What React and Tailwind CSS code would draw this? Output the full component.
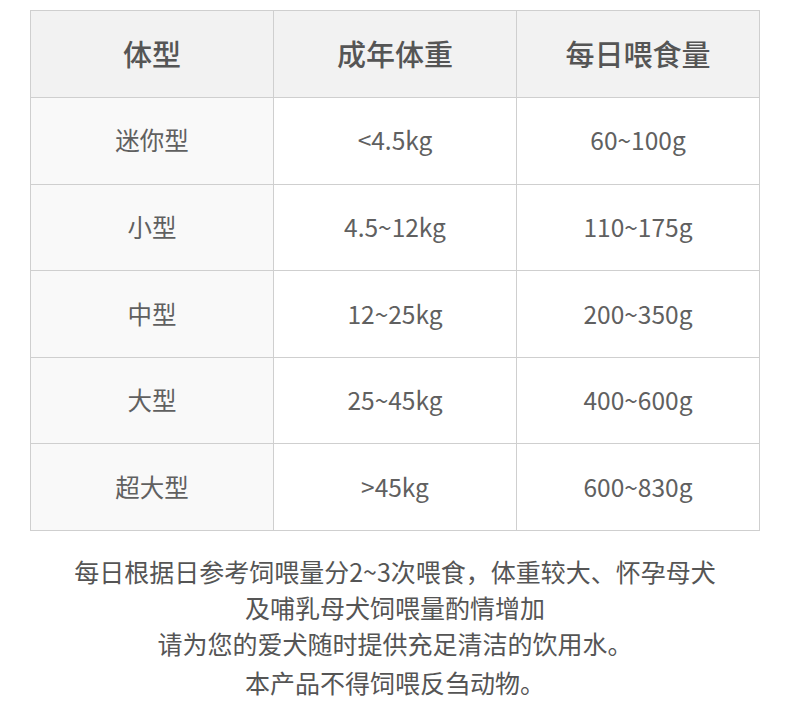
import React from 'react';

const rows = [
  ['迷你型', '<4.5kg', '60~100g'],
  ['小型', '4.5~12kg', '110~175g'],
  ['中型', '12~25kg', '200~350g'],
  ['大型', '25~45kg', '400~600g'],
  ['超大型', '>45kg', '600~830g'],
];

const font = { fontFamily: '"Noto Sans CJK SC", "Noto Sans", sans-serif' };

export default function App() {
  return (
    <div className="w-[790px] h-[725px] bg-white pt-[10px]" style={font}>
      <table className="ml-[30px] w-[730px] border-collapse table-fixed">
        <thead>
          <tr className="bg-[#f2f2f2] h-[87px]">
            {['体型', '成年体重', '每日喂食量'].map((h) => (
              <th key={h} className="border border-[#cfcfcf] text-[29px] font-medium text-[#555] text-center">
                {h}
              </th>
            ))}
          </tr>
        </thead>
        <tbody>
          {rows.map((r) => (
            <tr key={r[0]} className="h-[86.6px]">
              <td className="border border-[#cfcfcf] bg-[#f9f9f9] text-[24.5px] text-[#606060] text-center">{r[0]}</td>
              <td className="border border-[#cfcfcf] text-[24.5px] text-[#606060] text-center">{r[1]}</td>
              <td className="border border-[#cfcfcf] text-[24.5px] text-[#606060] text-center">{r[2]}</td>
            </tr>
          ))}
        </tbody>
      </table>
      <div className="mt-[22px] text-center text-[25px] leading-[36px] text-[#555]">
        <p>每日根据日参考饲喂量分2~3次喂食，体重较大、怀孕母犬</p>
        <p>及哺乳母犬饲喂量酌情增加</p>
        <p>请为您的爱犬随时提供充足清洁的饮用水。</p>
        <p className="mt-[3px]">本产品不得饲喂反刍动物。</p>
      </div>
    </div>
  );
}
